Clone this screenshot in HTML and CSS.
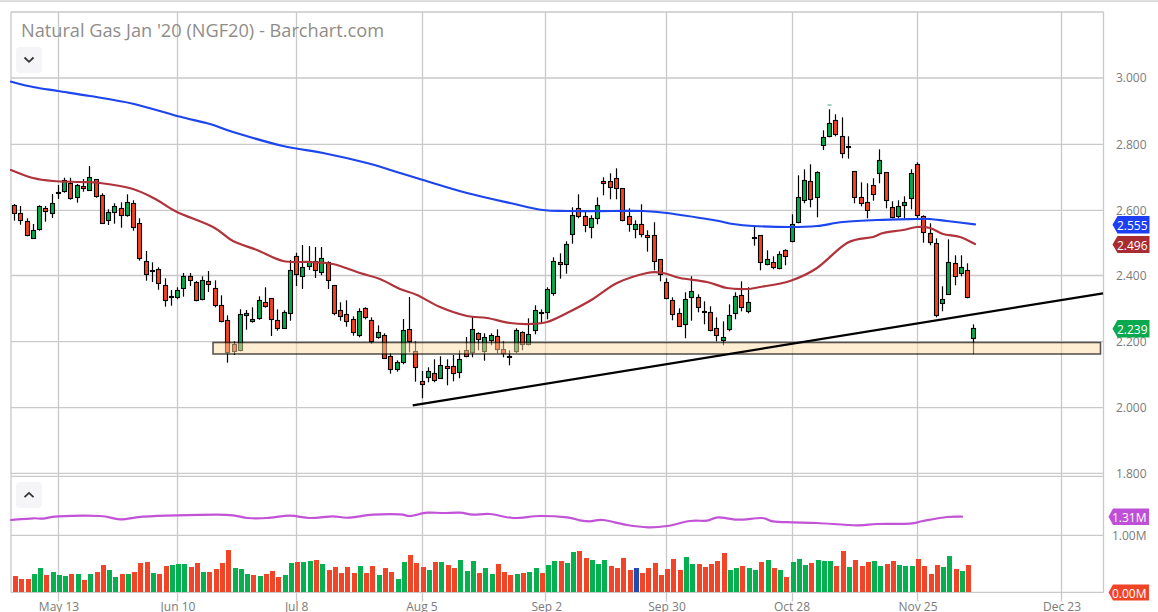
FILE: index.html
```html
<!DOCTYPE html>
<html lang="en">
<head>
<meta charset="utf-8">
<title>Natural Gas Jan '20 (NGF20) - Barchart.com</title>
<link rel="stylesheet" href="styles.css">
</head>
<body>
<main class="chart">
  <svg class="plot" id="plot" width="1158" height="612" viewBox="0 0 1158 612" xmlns="http://www.w3.org/2000/svg">
    <g id="grid"></g>
    <g id="candles"></g>
    <g id="volume"></g>
    <path id="ma200" class="ma ma200"></path>
    <path id="ma50" class="ma ma50"></path>
    <path id="osc" class="ma osc"></path>
    <rect class="zone" x="213" y="342.5" width="887.5" height="11.5"></rect>
    <line class="trend" x1="412.7" y1="405.3" x2="1103" y2="293.3"></line>
    <path class="tick-mark" d="M827.5 105h4"></path>
    <g class="axis">
      <text x="1146.5" y="82">3.000</text>
      <text x="1146.5" y="148.5">2.800</text>
      <text x="1146.5" y="214.5">2.600</text>
      <text x="1146.5" y="280">2.400</text>
      <text x="1146.5" y="346">2.200</text>
      <text x="1146.5" y="412">2.000</text>
      <text x="1146.5" y="478">1.800</text>
      <text x="1146.5" y="540">1.00M</text>
    </g>
    <g class="dates">
      <text x="59" y="611">May 13</text>
      <text x="178" y="611">Jun 10</text>
      <text x="296.7" y="611">Jul 8</text>
      <text x="422" y="611">Aug 5</text>
      <text x="546.7" y="611">Sep 2</text>
      <text x="667" y="611">Sep 30</text>
      <text x="792" y="611">Oct 28</text>
      <text x="918" y="611">Nov 25</text>
      <text x="1062" y="611">Dec 23</text>
    </g>
    <g class="badges">
      <polygon class="b-blue" points="1112.5,224.7 1117.5,216 1149.5,216 1149.5,233.5 1117.5,233.5"></polygon>
      <text x="1147.5" y="229.5">2.555</text>
      <polygon class="b-red" points="1112.5,244.5 1117.5,236 1149.5,236 1149.5,253 1117.5,253"></polygon>
      <text x="1147.5" y="249.5">2.496</text>
      <polygon class="b-green" points="1112.5,328.7 1117.5,320 1149.5,320 1149.5,337.5 1117.5,337.5"></polygon>
      <text x="1147.5" y="333.5">2.239</text>
      <polygon class="b-purple" points="1108.5,516.7 1113,508.5 1149,508.5 1149,525 1113,525"></polygon>
      <text x="1146.5" y="521.5">1.31M</text>
      <polygon class="b-orange" points="1108.5,592.5 1113,584.5 1149,584.5 1149,600.5 1113,600.5"></polygon>
      <text x="1146.5" y="597.5">0.00M</text>
    </g>
  </svg>
  <h1 class="title">Natural Gas Jan '20 (NGF20) - Barchart.com</h1>
  <button class="fold fold-main" type="button" aria-label="Collapse"><svg width="12" height="8" viewBox="0 0 12 8"><path d="M1.5 1.5 6 5.8l4.5-4.3"></path></svg></button>
  <button class="fold fold-sub" type="button" aria-label="Expand"><svg width="12" height="8" viewBox="0 0 12 8"><path d="M1.5 6.2 6 1.9l4.5 4.3"></path></svg></button>
</main>
<script src="app.js"></script>
</body>
</html>
```

FILE: styles.css
```css
* { box-sizing: border-box; }
html, body { margin: 0; padding: 0; background: #fff; overflow: hidden; }
.chart { position: relative; width: 1158px; height: 612px; overflow: hidden; font-family: "Open Sans", "Liberation Sans", sans-serif; }
.plot { display: block; }
.grid-line { stroke: #c9c9c9; stroke-width: 1.3; fill: none; }
.ma { fill: none; stroke-width: 2.2; stroke-linejoin: round; stroke-linecap: round; }
.ma200 { stroke: #1c45ee; }
.ma50 { stroke: #b0333b; }
.osc { stroke: #c253d6; }
.wick { stroke: #000; stroke-width: 1.2; }
.c-up { fill: #06a94d; stroke: #000; stroke-width: 1.1; }
.c-down { fill: #f4421f; stroke: #000; stroke-width: 1.1; }
.v-up { fill: #05b04e; }
.v-down { fill: #f24527; }
.v-flat { fill: #1f4bb4; }
.zone { fill: #ffdda6; fill-opacity: .5; stroke: #000; stroke-opacity: .65; stroke-width: 1.6; }
.trend { stroke: #000; stroke-width: 2.2; }
.tick-mark { stroke: #3aa873; stroke-width: 1; fill: none; }
.axis text { font-family: "Open Sans", "Liberation Sans", sans-serif; font-size: 12px; fill: #7b7b7b; text-anchor: end; }
.dates text { font-family: "Open Sans", "Liberation Sans", sans-serif; font-size: 12px; fill: #7b7b7b; text-anchor: middle; }
.badges text { font-family: "Open Sans", "Liberation Sans", sans-serif; font-size: 12px; fill: #fff; text-anchor: end; }
.b-blue { fill: #1c3ff5; }
.b-red { fill: #a92c33; }
.b-green { fill: #0aa94f; }
.b-purple { fill: #bf4fd6; }
.b-orange { fill: #f04426; }
.title { position: absolute; left: 21px; top: 18px; margin: 0; font-size: 18.2px; line-height: 24px; font-weight: 400; color: #8f8d89; white-space: nowrap; }
.fold { position: absolute; left: 16px; width: 26px; height: 26px; padding: 0; border: 0; border-radius: 4px; background: #f5f5f8; display: flex; align-items: center; justify-content: center; }
.fold path { fill: none; stroke: #333; stroke-width: 1.8; }
.fold-main { top: 47px; }
.fold-sub { top: 482px; }
```

FILE: app.js
```js
var NS = "http://www.w3.org/2000/svg";
function el(parent, name, attrs) {
  var n = document.createElementNS(NS, name);
  for (var k in attrs) n.setAttribute(k, attrs[k]);
  parent.appendChild(n);
  return n;
}
function line(g, x1, y1, x2, y2, cls) {
  el(g, "line", { x1: x1, y1: y1, x2: x2, y2: y2, "class": cls });
}

/* x, wick top, body top, body bottom, wick bottom, direction */
var C = [
[14,204,205.5,213.5,220.7,0],[20,206,213.5,220.3,224.7,0],[27,218.3,221.3,235.3,236.3,0],[33,224,230.3,238.3,238.7,1],
[39,205.3,206.3,229.7,230.7,1],[45,206,208.7,211.3,221.7,0],[52,194,203.3,213.3,218,1],[58,185,192.5,193,199,1],
[64,177.7,180.7,191.3,192.7,1],[70,177.7,183.3,198.7,199.7,0],[77,184,185.3,197.3,202.7,1],[83,179,186.3,188.3,191.7,0],
[89,166,177.3,190.3,190.7,1],[96,179.3,179.3,196.3,197.7,0],[102,193.3,195.3,223.3,223.3,0],[108,209.3,212.3,220.3,225,1],
[114,203.3,206.3,212.3,223.7,1],[121,202.3,208.3,215.3,227.7,0],[127,194.3,202.3,215.3,216.7,1],[133,200.3,203.3,227.3,230.7,0],
[139,218.3,223.3,258.3,260.7,0],[146,251,261.3,274.3,280.7,0],[152,262.3,270.5,271.5,282,0],[158,267.3,269.3,283.3,289.7,0],
[165,278.3,285.3,300.3,306.7,0],[171,290,296.5,297.5,305.7,0],[177,287.3,290.3,297.7,299.3,1],[183,273,276.3,288.3,296.7,1],
[190,273,276.3,280.3,286,0],[196,281,282.3,300.3,301.3,0],[202,276.3,280.3,299.3,300.3,1],[208,271,281.3,284.3,292,0],
[215,280.3,288.3,305.3,307.3,0],[221,295.3,305.3,321.3,322.3,0],[227,315.3,320.3,352.3,362.7,0],[234,341.3,344.3,351.3,355,0],
[240,309.3,314.3,350.3,351.3,1],[246,310,313.3,315.3,329.7,1],[252,307.3,319.3,321.3,322.7,1],[259,296.3,300.3,318.3,319.7,1],
[265,287.3,302.3,306.3,307.7,0],[271,298.3,298.3,319.3,336,0],[277,309.3,320.3,328.3,330.7,0],[284,310.3,312.3,328.3,328.7,1],
[290,260,270.3,313.3,320.7,1],[296,252.7,256.3,274.3,286,0],[302,245,267.3,276.3,289,1],[309,246,261.3,266.3,270,1],
[315,247,261.3,270.3,278,0],[321,247,258.3,272.3,275.3,1],[328,261.3,262.3,280.3,289,0],[334,285.3,285.3,313.3,315.3,0],
[340,302.3,310.3,316.3,320.7,0],[346,300.3,314.3,321.3,326.7,0],[353,316.3,319.3,332.3,335.7,0],[359,308.3,311.3,335.3,337.3,1],
[365,307.3,308.3,317.3,319.3,0],[371,317.3,320.3,341.3,343.7,0],[378,325.3,332.3,337.3,338.7,1],[384,333.3,335.3,358.3,358.3,0],
[390,353.3,356.3,369.3,373.7,0],[397,360.3,362.3,369.3,371.7,1],[403,319,330.3,362.3,364.3,1],[409,297,329.3,341.3,352.3,0],
[415,341.3,351.3,367.3,381.7,0],[422,371,381.3,384.3,398.3,0],[428,367.3,371.3,377.3,382.3,1],[434,359.3,373.3,380.3,382.3,0],
[440,356.3,365.3,378.3,378.3,1],[447,359.3,366.3,368.3,385.3,0],[453,355,366.3,373.3,381.3,0],[459,350.3,359.3,372.3,378.3,1],
[466,337,350.3,356.3,357.3,0],[472,316.3,329.3,352.3,357.3,1],[478,332.3,333.3,339.3,350.3,0],[484,333.3,337.3,351.3,360.7,1],
[491,333.3,335.3,340.3,345.3,1],[497,329.3,336.3,349.3,353.3,0],[503,341.3,349.3,353.3,357.3,0],[509,350.3,356,356.5,365.3,1],
[516,328.3,330.3,351.3,353.3,1],[522,331.3,332.3,344.3,350.3,0],[528,318.3,334.3,344.3,345.3,1],[535,305.3,310.3,330.3,334.3,1],
[541,309.3,312,312.5,322.3,1],[547,287.3,289.3,312.3,319.3,1],[553,257.3,261.3,293.7,295.7,1],[560,253.3,262.3,264.3,278.7,0],
[566,241.3,244.3,264.3,273.7,1],[572,207.3,215.3,234.3,243.7,1],[578,194.3,208.3,216.3,218.3,0],[585,210.3,216.3,225.3,232.3,0],
[591,215.3,218.3,227.3,238.3,1],[597,197.3,205.3,218.3,224.3,1],[603,177.3,181.3,183.3,195.3,0],[610,173.3,181.3,187.3,199.3,0],
[616,168.3,178.3,188.3,199.3,0],[622,188.3,188.3,220.3,221.3,0],[629,208.3,216.3,224.3,231.7,0],[635,220.3,224.3,229.3,238.3,1],
[641,204.3,224.3,234.3,237.3,0],[647,230.3,235.3,237.3,251.7,0],[654,222.3,235.3,261.3,270.3,0],[660,259.3,259.3,274.3,281.3,0],
[666,278.3,282.3,298.3,299.3,0],[672,297.3,300.3,314.3,320.3,0],[679,308.3,313.3,326.3,326.3,0],[685,292.3,299.3,324.3,338.3,1],
[691,276.3,291.3,297.3,320.7,1],[698,294.3,297.3,307.3,312.3,0],[704,301.3,311.5,312,324.3,0],[710,306.3,312.3,330.3,331.3,0],
[716,317.3,328.3,335.3,341.3,0],[723,321.3,337.3,340.3,345.3,1],[729,304.3,315.3,329.3,331.3,1],[735,292.3,296.3,313.3,319.3,1],
[741,281.3,295.3,307.3,311.3,0],[748,287.3,302.3,311.3,313.3,1],[754,226.3,237,237.5,245.7,0],[760,235.3,235.3,262.3,270.3,0],
[767,250.3,259.3,264.3,265.3,1],[773,256.3,262.3,267.3,269.3,0],[779,251.3,254.3,268.3,269.3,1],[785,249.3,250.3,256.3,265.3,0],
[792,214.3,224.3,241.3,242.3,1],[798,175.3,197.3,222.3,223.3,1],[804,169.3,180.3,200.3,203.3,1],[810,164.3,181.3,199.3,207.3,0],
[817,171.3,172.3,197.3,217.3,1],[823,130.3,137.3,145.3,150,1],[829,109.3,123.3,136.3,137.3,1],[835,114.3,120.3,134.3,136.3,0],
[842,117.3,136.3,153.3,158.3,0],[848,136.3,146.5,147,158.7,0],[854,171.3,171.3,197.3,203.3,0],[861,182.3,197.3,203.3,206.3,0],
[867,183.3,202.3,210.3,218.3,0],[873,178.3,185.3,194.3,200.7,0],[879,149.3,160.3,173.3,183.3,1],[886,172.3,172.3,200.3,208.3,0],
[892,201.3,207.3,217.3,218.3,0],[898,200.3,206.3,216.3,218.3,1],[904,196.3,202.3,205.3,218.3,1],[911,169.3,173.3,198.3,209.3,1],
[917,162.3,164.3,215.3,219.3,0],[923,215.3,216.3,232.3,242.7,0],[930,223.3,233.3,242.3,245.3,0],[936,238.3,243.3,315.3,317.3,0],
[942,286.3,299.3,303.3,311.3,1],[948,239.3,262.3,294.3,294.3,1],[955,255.3,263.3,276.3,285.3,0],[961,255.3,267.3,273.3,276.3,1],
[967,263.3,270.3,297.3,298.3,0],[973,324.3,328.3,338.3,354.3,1]
];

/* top of each volume bar, in 3x zoom px from y=470; r red, g green, b blue */
var V = "318r 327r 327r 312g 294g 315r 306g 315g 318g 312r 312g 330r 312g 306r 285r 300g 321g 312r 312g 306r 279r 276r 309g 312r 288r 285g 282g 282g 291r 279r 306g 306r 297r 279r 240r 294g 297g 312g 315r 318g 312r 303r 321r 315g 279g 276r 276g 273g 270r 282g 300r 291r 309r 291r 309r 288g 309r 288r 315g 294r 306r 327g " +
"276g 255r 279r 291r 300g 276r 276g 285r 294r 270g 303g 273g 309r 294g 312g 282r 306r 315r 312g 309r 306g 294g 309r 285g 273g 273r 279g 246g 243r 264r 270g 282g 270g 288r 294r 264r 300r 294b 309r 294r 279r 315r 297r 267r 300r 261g 282g 282r 291r 282r 273r 249r 300g 294g 288r 294g 300g 276r 270g 294r 300g 321r 276g 267g " +
"285g 279r 270g 273g 273g 288r 243r 291g 270r 288r 276r 273g 288g 282r 273r 285g 288g 288g 267r 288r 312r 285r 291g 258g 297r 303g 285r";

var MA200 = [[11,81.7],[33,87],[58,91],[90,96],[133,103.7],[177,116],[210,124],[233,132],[283,146],[323,153],[367,163],[400,173],[423,180],[467,193],[510,203],[543,210],[567,211],[613,211],[643,211],[667,213],[713,220],[733,224],[753,226],[790,227],[817,226],[843,222],[877,220],[917,219],[930,219],[947,221],[975,224.3]];
var MA50 = [[11,170],[33,178],[53,181],[80,182],[100,183],[133,189],[157,200],[177,212],[213,227],[233,241],[257,250],[283,261],[310,262],[333,264],[360,273],[380,279],[400,289],[417,295],[440,307],[467,316],[487,318],[510,323],[530,324],[547,322],[567,313],[593,299],[617,283],[647,273],[663,273],[680,278],[707,282],[727,288],[747,289],[760,287],[790,281],[817,268],[847,243],[873,237],[883,233],[903,230],[917,227],[930,228],[943,234],[960,237],[975,244]];
var OSC = [[11,520],[33,518.3],[43,518.6],[58,516.3],[100,516],[120,519.3],[143,516.7],[177,515.3],[217,514.7],[233,515.3],[248,518],[267,518],[290,515.7],[310,518],[333,516.3],[348,517.7],[373,514.7],[400,514.3],[410,516],[427,512.7],[443,513],[460,512.7],[473,514.7],[490,514],[513,518],[540,516],[567,517.3],[580,520.3],[590,521.3],[603,520],[627,525],[648,527.3],[667,526],[690,521],[707,520.7],[718,517.3],[738,519.7],[762,518],[773,521.3],[793,522.3],[817,523],[857,525.3],[877,524],[910,523.7],[923,521],[947,517],[962,516.7]];

/* Catmull-Rom through the sampled points */
function smooth(a) {
  var d = "M" + a[0][0] + " " + a[0][1];
  for (var i = 0; i < a.length - 1; i++) {
    var p0 = a[Math.max(i - 1, 0)], p1 = a[i], p2 = a[i + 1], p3 = a[Math.min(i + 2, a.length - 1)];
    d += "C" + (p1[0] + (p2[0] - p0[0]) / 6).toFixed(1) + " " + (p1[1] + (p2[1] - p0[1]) / 6).toFixed(1) + " " +
         (p2[0] - (p3[0] - p1[0]) / 6).toFixed(1) + " " + (p2[1] - (p3[1] - p1[1]) / 6).toFixed(1) + " " + p2[0] + " " + p2[1];
  }
  return d;
}

var grid = document.getElementById("grid");
line(grid, 0, 1.2, 1158, 1.2, "grid-line");
line(grid, 11, 12, 1103.5, 12, "grid-line");
line(grid, 11, 12, 11, 592.5, "grid-line");
line(grid, 1103.5, 12, 1103.5, 592.5, "grid-line");
[78, 144.3, 210.3, 275.5, 341.7, 407.7, 473.3, 476.3, 535.3, 592.3].forEach(function (y) {
  line(grid, 11, y, 1103.5, y, "grid-line");
});
[58.5, 177.5, 296.5, 422.5, 545.5, 666.5, 792.5, 917.5, 1061.5].forEach(function (x) {
  line(grid, x, 12, x, 601.5, "grid-line");
});

var cg = document.getElementById("candles");
C.forEach(function (c) {
  var x = c[0] + 0.5;
  line(cg, x, c[1], x, c[4], "wick");
  var top = Math.floor(c[2]) + 0.5, bot = Math.max(Math.floor(c[3]) + 0.5, top + 1);
  el(cg, "rect", { x: c[0] - 1.5, y: top, width: 4, height: bot - top, "class": c[5] ? "c-up" : "c-down" });
});

var vg = document.getElementById("volume");
V.trim().split(/\s+/).forEach(function (s, i) {
  var top = 470 + parseInt(s, 10) / 3, kind = s.slice(-1);
  el(vg, "rect", { x: C[i][0] - 1, y: top, width: 5, height: 592 - top,
    "class": kind === "r" ? "v-down" : kind === "g" ? "v-up" : "v-flat" });
});

document.getElementById("ma200").setAttribute("d", smooth(MA200));
document.getElementById("ma50").setAttribute("d", smooth(MA50));
document.getElementById("osc").setAttribute("d", smooth(OSC));
```
